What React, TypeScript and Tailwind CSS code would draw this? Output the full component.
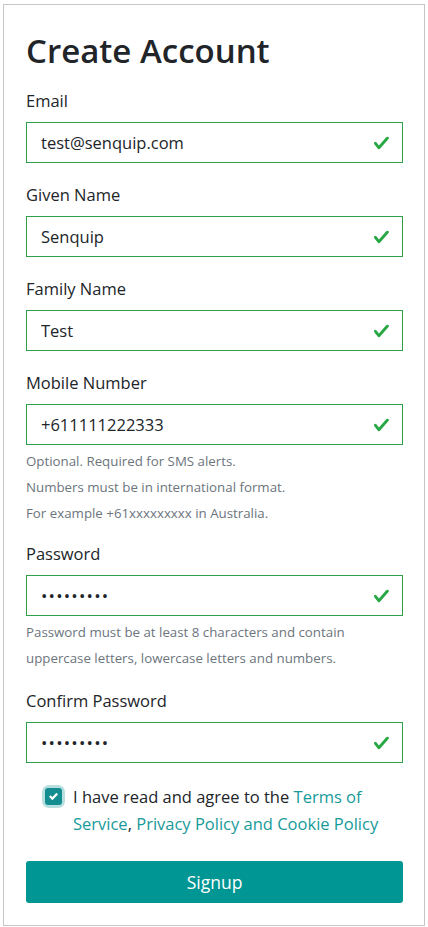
import { useState } from "react";

const font = { fontFamily: '"Open Sans", "Noto Sans", sans-serif' };

const ValidCheck = () => (
  <svg
    className="absolute right-[13px] top-1/2 -translate-y-1/2 pointer-events-none"
    width="17"
    height="17"
    viewBox="0 0 8 8"
  >
    <path
      fill="#28a745"
      d="M2.3 6.73.6 4.53c-.4-1.04.46-1.4 1.1-.8l1.1 1.4 3.4-3.8c.6-.63 1.6-.27 1.2.7l-4 4.6c-.43.5-.8.4-1.1.1z"
    />
  </svg>
);

type FieldProps = {
  id: string;
  label: string;
  value: string;
  type?: string;
  className?: string;
  children?: React.ReactNode;
};

const Field: React.FC<FieldProps> = ({ id, label, value, type = "text", className = "mb-5", children }) => {
  const [val, setVal] = useState(value);
  return (
    <div className={className}>
      <label htmlFor={id} className="block text-[16.5px] leading-6 text-[#212529] mb-[9px]">
        {label}
      </label>
      <div className="relative">
        <input
          id={id}
          type={type}
          value={val}
          onChange={(e) => setVal(e.target.value)}
          className={
            type === "password"
              ? "block w-full h-[41px] border border-[#2fa04a] bg-white pl-[14px] pr-10 text-[17px] tracking-[1.2px] text-[#212529] outline-none"
              : "block w-full h-[41px] border border-[#2fa04a] bg-white pl-[14px] pr-10 text-[16.5px] text-[#212529] outline-none"
          }
          style={font}
        />
        <ValidCheck />
      </div>
      {children}
    </div>
  );
};

export default function App() {
  const [agree, setAgree] = useState(true);

  return (
    <div className="min-h-screen bg-white pt-1 px-[3px]" style={font}>
      <div className="border border-[#c6c6c6] pl-[22px] pr-[21px] pt-[22px] pb-[22px]">
        <h1 className="text-[33px] leading-[48px] font-semibold text-[#212529] mb-[14px]">Create Account</h1>

        <Field id="email" label="Email" value="test@senquip.com" />
        <Field id="given" label="Given Name" value="Senquip" />
        <Field id="family" label="Family Name" value="Test" />
        <Field id="mobile" label="Mobile Number" value="+611111222333" className="mb-4">
          <div className="mt-[3px] text-[13.3px] leading-[26px] text-[#6c757d]">
            <p>Optional. Required for SMS alerts.</p>
            <p>Numbers must be in international format.</p>
            <p>For example +61xxxxxxxxx in Australia.</p>
          </div>
        </Field>
        <Field id="password" label="Password" value="secret123" type="password" className="mb-[18px]">
          <div className="mt-[3px] text-[13.3px] leading-[26px] text-[#6c757d]">
            <p>Password must be at least 8 characters and contain</p>
            <p>uppercase letters, lowercase letters and numbers.</p>
          </div>
        </Field>
        <Field id="confirm" label="Confirm Password" value="secret123" type="password" className="mb-5" />

        <div className="flex items-start pl-[16px] mb-[24px]">
          <button
            type="button"
            onClick={() => setAgree(!agree)}
            className="shrink-0 mt-[2px] mr-[8px] rounded-[7px] p-[3px] bg-[#b8dfdf]"
          >
            <span className="flex w-[17px] h-[17px] items-center justify-center rounded-[3px] bg-[#138d90]">
              {agree && (
                <svg width="9" height="9" viewBox="0 0 8 8">
                  <path fill="#fff" d="M6.564.75l-3.59 3.612-1.538-1.55L0 4.26l2.974 2.99L8 2.193z" />
                </svg>
              )}
            </span>
          </button>
          <p className="text-[16.5px] leading-[27px] text-[#212529]">
            I have read and agree to the{" "}
            <a href="#" className="text-[#179a9a]">Terms of Service</a>,{" "}
            <a href="#" className="text-[#179a9a]">Privacy Policy and Cookie Policy</a>
          </p>
        </div>

        <button
          type="submit"
          className="w-full h-[42px] rounded-[3px] bg-[#009694] text-white text-[17.5px]"
        >
          Signup
        </button>
      </div>
    </div>
  );
}
